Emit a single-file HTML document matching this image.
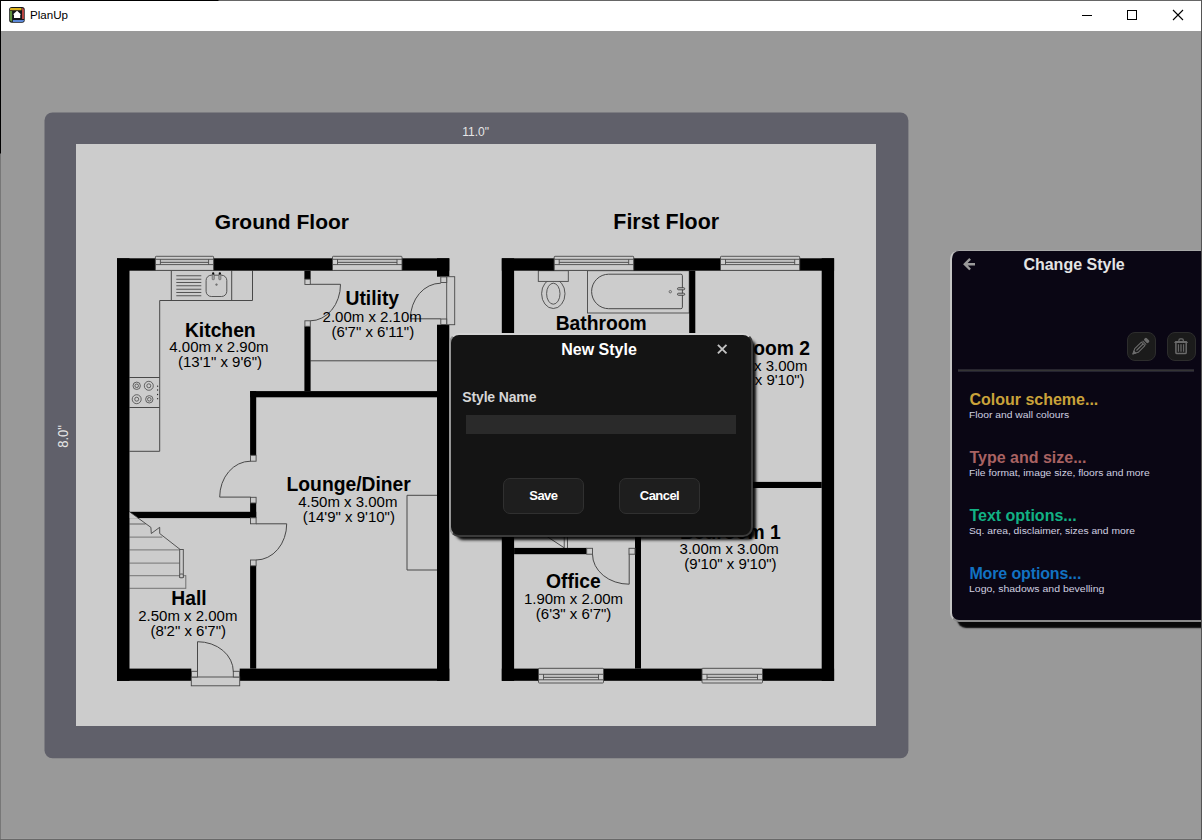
<!DOCTYPE html>
<html lang="en">
<head>
<meta charset="utf-8">
<title>PlanUp</title>
<style>
html,body{margin:0;padding:0;}
body{width:1202px;height:840px;overflow:hidden;position:relative;background:#999999;font-family:"Liberation Sans",sans-serif;}
.abs{position:absolute;}
#edgeL{left:0;top:0;width:1px;height:840px;background:linear-gradient(#000 0,#000 153px,#777 154px,#777 100%);}
#edgeT{left:0;top:0;width:1202px;height:1px;background:linear-gradient(90deg,#000 0,#000 218px,#666 219px,#666 100%);}
#edgeR{left:1201px;top:0;width:1px;height:840px;background:#555;}
#edgeB{left:1px;top:838px;width:1200px;height:1px;background:#9d9d9d;}
#edgeB2{left:0;top:839px;width:1202px;height:1px;background:#686868;}
#titlebar{left:1px;top:1px;width:1200px;height:30px;background:#fff;}
#apptitle{left:30px;top:7px;font-size:11.6px;line-height:15px;color:#000;white-space:nowrap;}
#frame{left:44.5px;top:112.4px;width:864px;height:646px;background:#60606a;border-radius:8px;}
#paper{left:76px;top:144px;width:800px;height:582px;background:#cccccc;}
#dimW{left:425.6px;top:125px;width:100px;text-align:center;font-size:12px;line-height:15px;color:#e6e6e6;}
#dimH{left:13.2px;top:427.5px;width:100px;text-align:center;font-size:14px;line-height:17px;color:#e6e6e6;transform:rotate(-90deg) scale(0.93,1.05);}
#plan{left:0;top:0;}
#plan text{font-family:"Liberation Sans",sans-serif;fill:#000;text-anchor:middle;}
#plan .ft{font-size:21px;font-weight:bold;}
#plan .rn{font-size:19.3px;font-weight:bold;}
#plan .rd{font-size:15px;}
/* right panel */
#panel{left:950px;top:250px;width:252px;height:369px;background:#0a0614;border-radius:9px 0 0 9px;border-left:2px solid #c4c4c4;border-top:1px solid #a8a8a8;border-bottom:2px solid #8a8a8a;box-shadow:7px 6px 1.5px rgba(0,0,0,.95);}
#ptitle{left:1023.4px;top:255.3px;font-size:16px;font-weight:bold;line-height:20px;color:#e4e4e4;white-space:nowrap;}
.ibtn{width:29px;height:29px;box-sizing:border-box;border:1px solid #2d2d2d;background:#1b1b1b;border-radius:8px;}
#pdiv{left:958px;top:369px;width:236px;height:3px;background:linear-gradient(#27252f 0,#27252f 1px,#343434 1px,#343434 2px,#242230 2px,#242230 3px);}
.mi{left:969.4px;font-size:16px;font-weight:bold;line-height:20px;white-space:nowrap;}
.ms{left:968.8px;font-size:9.2px;line-height:13px;color:#d0d0e0;white-space:nowrap;transform:scaleX(1.12);transform-origin:0 0;}
/* dialog */
#dlg{left:449px;top:333px;width:300px;height:200px;background:#141414;border-radius:10px;border-left:2px solid #969696;border-top:2px solid #d3d3d3;border-right:2px solid #3b3b3b;border-bottom:2px solid #3b3b3b;box-shadow:5px 5px 3px -2.8px rgba(0,0,0,.95);}
#dtitle{left:561.2px;top:339.5px;font-size:16px;font-weight:bold;line-height:20px;color:#fff;white-space:nowrap;}
#dlabel{left:462.3px;top:388.6px;font-size:14px;font-weight:bold;line-height:17px;color:#d6d6d6;white-space:nowrap;letter-spacing:-0.15px;}
#dinput{left:466px;top:415px;width:270px;height:19px;background:#2a2a2a;}
.dbtn{top:478px;width:80.6px;height:35.7px;box-sizing:border-box;border:1px solid #303030;background:#1e1e1e;border-radius:7px;color:#fff;font-size:13px;font-weight:bold;line-height:33.6px;text-align:center;letter-spacing:-0.55px;}
</style>
</head>
<body>
<div class="abs" id="titlebar"></div>
<svg class="abs" id="appicon" style="left:8px;top:6px" width="18" height="18" viewBox="8 6 18 18">
<rect x="9.2" y="7" width="15.5" height="15.7" rx="2.6" fill="#14161a"/>
<path d="M10.9 7.9H21.5V10.3H10L10 9Q10 7.9 10.9 7.9Z" fill="#dcb21e"/>
<path d="M22 8.1Q24 8.3 24 10V18.9H22Z" fill="#b94442"/>
<path d="M9.9 10.9H12.1V21.8Q9.9 21.6 9.9 19.6Z" fill="#5f923c"/>
<path d="M12.9 20H23.9V20.6Q23.7 22.1 22 22.1H12.9Z" fill="#5b88d8"/>
<path d="M17.05 10.7L21.1 14.5H20.2V17.9H14V14.5H12.9Z" fill="#fff"/>
</svg>
<div class="abs" id="apptitle">PlanUp</div>
<svg class="abs" id="winctl" style="left:1070px;top:1px" width="130" height="30" viewBox="1070 1 130 30">
<path d="M1082 15.5H1092" stroke="#000" stroke-width="1" fill="none"/>
<rect x="1127.5" y="10.5" width="9" height="9" stroke="#000" stroke-width="1" fill="none"/>
<path d="M1173 10L1183 20M1183 10L1173 20" stroke="#000" stroke-width="1.1" fill="none"/>
</svg>

<svg class="abs" style="left:40px;top:108px" width="874" height="656" viewBox="40 108 874 656"><rect x="44.5" y="112.5" width="863.9" height="645.8" rx="8" fill="#60606a"/></svg>
<div class="abs" id="paper"></div>
<div class="abs" id="dimW">11.0"</div>
<div class="abs" id="dimH">8.0"</div>

<!--PLAN-->
<svg class="abs" id="plan" width="1202" height="840" viewBox="0 0 1202 840">
<text x="281.9" y="229" class="ft">Ground Floor</text>
<text x="666.2" y="229" class="ft" style="font-size:21.4px">First Floor</text>
<path d="M159.7 300.5H252.5V270.7M171.3 270.7V300.5M231.7 270.7V300.5M159.7 300.5V451.3H129.5" stroke="#484848" stroke-width="1" fill="none"/>
<path d="M176.3 275.8H201.3M176.3 279.2H201.3M176.3 282.5H201.3M176.3 285.8H201.3M176.3 289.2H201.3M176.3 292.5H201.3M176.3 295.8H201.3" stroke="#555" stroke-width="1.1" fill="none"/>
<rect x="206.1" y="275.2" width="20.7" height="21.3" fill="none" stroke="#484848" stroke-width="0.9" rx="5.2"/>
<rect x="212.2" y="274.0" width="2.1" height="5.7" fill="#a8a8a8" stroke="#555" stroke-width="0.6" rx="0.6"/>
<rect x="218.8" y="274.0" width="2.1" height="5.7" fill="#a8a8a8" stroke="#555" stroke-width="0.6" rx="0.6"/>
<circle cx="213.2" cy="273.5" r="1.15" fill="#0a0a0a"/><circle cx="219.85" cy="273.5" r="1.15" fill="#0a0a0a"/>
<circle cx="216.5" cy="284.6" r="0.9" fill="#777" stroke="#555" stroke-width="0.4"/>
<path d="M129.5 377.5H159.7M129.5 407.5H159.7" stroke="#484848" stroke-width="1" fill="none"/>
<circle cx="136.7" cy="385.8" r="3.7" fill="none" stroke="#484848" stroke-width="0.8"/><circle cx="136.7" cy="385.8" r="1.8" fill="none" stroke="#484848" stroke-width="0.8"/>
<circle cx="148.8" cy="385.8" r="4.5" fill="none" stroke="#484848" stroke-width="0.8"/><circle cx="148.8" cy="385.8" r="2" fill="none" stroke="#484848" stroke-width="0.8"/>
<circle cx="136.7" cy="399.2" r="4.5" fill="none" stroke="#484848" stroke-width="0.8"/><circle cx="136.7" cy="399.2" r="2" fill="none" stroke="#484848" stroke-width="0.8"/>
<circle cx="149.3" cy="399.3" r="3.7" fill="none" stroke="#484848" stroke-width="0.8"/><circle cx="149.3" cy="399.3" r="1.8" fill="none" stroke="#484848" stroke-width="0.8"/>
<circle cx="157.6" cy="386.2" r="0.65" fill="#222"/>
<circle cx="157.6" cy="390" r="0.65" fill="#222"/>
<circle cx="157.6" cy="394.5" r="0.65" fill="#222"/>
<circle cx="157.6" cy="398.7" r="0.65" fill="#222"/>
<path d="M310.5 360.8H437" stroke="#484848" stroke-width="1" fill="none"/>
<path d="M437 495.3H407V570H437" stroke="#484848" stroke-width="1" fill="none"/>
<path d="M129.5 524H145.6M129.5 537.1H162.3M129.5 549.9H179.7M129.5 563.1H179.7M129.5 575.7H185.8M129.5 588.3H185.8" stroke="#858585" stroke-width="1.3" fill="none"/>
<path d="M185.8 575.2V588.8" stroke="#666" stroke-width="0.9" fill="none"/>
<path d="M129.5 511.8L150.9 527.4L151.3 533.5L159.7 527.3V533.5L180.2 549.5" stroke="#333" stroke-width="0.8" fill="none"/>
<rect x="179.7" y="549.5" width="3.6" height="28.0" fill="#cccccc" stroke="#484848" stroke-width="0.9"/>
<rect x="179.7" y="574.0" width="3.6" height="3.8" fill="#cccccc" stroke="#484848" stroke-width="0.9" rx="1"/>
<rect x="117.0" y="258.3" width="332.3" height="12.4" fill="#000"/>
<rect x="117.0" y="668.6" width="74.3" height="12.2" fill="#000"/>
<rect x="239.7" y="668.6" width="209.6" height="12.2" fill="#000"/>
<rect x="117.0" y="258.3" width="12.5" height="422.6" fill="#000"/>
<rect x="437.0" y="258.3" width="12.3" height="18.4" fill="#000"/>
<rect x="437.0" y="324.7" width="12.3" height="356.2" fill="#000"/>
<rect x="304.4" y="270.7" width="6.2" height="8.5" fill="#000"/>
<rect x="304.4" y="326.3" width="6.2" height="64.9" fill="#000"/>
<rect x="250.1" y="391.1" width="186.9" height="6.2" fill="#000"/>
<rect x="250.1" y="391.1" width="6.1" height="64.2" fill="#000"/>
<rect x="250.1" y="503.0" width="6.1" height="15.1" fill="#000"/>
<rect x="250.1" y="565.8" width="6.1" height="102.8" fill="#000"/>
<rect x="129.5" y="511.8" width="126.7" height="6.3" fill="#000"/>
<path d="M129.5 511.7L138.3 518.1H129.5Z" fill="#cccccc"/>
<path d="M129.5 511.8L138.3 518.1" stroke="#333" stroke-width="0.8" fill="none"/>
<rect x="304.9" y="279.2" width="5.4" height="5.3" fill="#cccccc" stroke="#484848" stroke-width="0.9"/>
<rect x="304.9" y="320.8" width="5.4" height="5.5" fill="#cccccc" stroke="#484848" stroke-width="0.9"/>
<path d="M310.3 284.3H340.5A30.2 36.5 0 0 1 310.3 320.8" stroke="#484848" stroke-width="1" fill="none"/>
<rect x="250.5" y="455.3" width="5.6" height="5.9" fill="#cccccc" stroke="#484848" stroke-width="0.9"/>
<rect x="250.5" y="497.3" width="5.6" height="5.7" fill="#cccccc" stroke="#484848" stroke-width="0.9"/>
<path d="M250.5 497.1H219.7A30.8 35.9 0 0 1 250.5 461.2" stroke="#484848" stroke-width="1" fill="none"/>
<rect x="250.5" y="517.8" width="5.6" height="6.0" fill="#cccccc" stroke="#484848" stroke-width="0.9"/>
<rect x="250.5" y="560.0" width="5.6" height="5.8" fill="#cccccc" stroke="#484848" stroke-width="0.9"/>
<path d="M256.1 523.8H286.7A30.6 36.2 0 0 1 256.1 560" stroke="#484848" stroke-width="1" fill="none"/>
<rect x="446.7" y="276.7" width="8.0" height="48.0" fill="#cccccc" stroke="#484848" stroke-width="0.9"/>
<rect x="440.8" y="276.9" width="5.9" height="5.6" fill="#cccccc" stroke="#484848" stroke-width="0.9"/>
<rect x="440.8" y="319.0" width="5.9" height="5.5" fill="#cccccc" stroke="#484848" stroke-width="0.9"/>
<path d="M440.8 318.8H410.4A30.4 35.6 0 0 1 440.8 283.2" stroke="#484848" stroke-width="1" fill="none"/>
<rect x="191.3" y="677.0" width="48.4" height="8.8" fill="#cccccc" stroke="#484848" stroke-width="0.9"/>
<rect x="191.5" y="671.3" width="6.0" height="5.7" fill="#cccccc" stroke="#484848" stroke-width="0.9"/>
<rect x="233.3" y="671.3" width="6.2" height="5.7" fill="#cccccc" stroke="#484848" stroke-width="0.9"/>
<path d="M197.5 671.3V641.7A35.8 29.8 0 0 1 233.3 671.5" stroke="#484848" stroke-width="1" fill="none"/>
<rect x="155.4" y="256.3" width="58.2" height="14.1" fill="#cccccc" stroke="#484848" stroke-width="0.9" rx="0.8"/>
<rect x="160.4" y="259.3" width="48.2" height="3.1" fill="#c0c0c0"/>
<path d="M155.4 259.3H213.6M160.4 262.40000000000003H208.6M155.4 264.6H213.6M160.4 259.3V264.6M208.6 259.3V264.6" stroke="#484848" stroke-width="0.9" fill="none"/>
<rect x="332.5" y="256.3" width="69.5" height="14.1" fill="#cccccc" stroke="#484848" stroke-width="0.9" rx="0.8"/>
<rect x="337.5" y="259.3" width="59.5" height="3.1" fill="#c0c0c0"/>
<path d="M332.5 259.3H402M337.5 262.40000000000003H397M332.5 264.6H402M337.5 259.3V264.6M397 259.3V264.6" stroke="#484848" stroke-width="0.9" fill="none"/>
<text x="220.3" y="336.7" class="rn">Kitchen</text>
<text x="218.9" y="351.7" class="rd">4.00m x 2.90m</text>
<text x="220" y="367.3" class="rd">(13&#39;1&quot; x 9&#39;6&quot;)</text>
<text x="372.3" y="305" class="rn">Utility</text>
<text x="372.2" y="321.5" class="rd">2.00m x 2.10m</text>
<text x="372.8" y="337" class="rd">(6&#39;7&quot; x 6&#39;11&quot;)</text>
<text x="348.7" y="490.7" class="rn">Lounge/Diner</text>
<text x="347.8" y="506.5" class="rd">4.50m x 3.00m</text>
<text x="348.8" y="521.7" class="rd">(14&#39;9&quot; x 9&#39;10&quot;)</text>
<text x="189" y="605" class="rn">Hall</text>
<text x="187.8" y="620.5" class="rd">2.50m x 2.00m</text>
<text x="188.2" y="635.8" class="rd">(8&#39;2&quot; x 6&#39;7&quot;)</text>
<rect x="587.5" y="270.7" width="101.7" height="42.3" fill="none" stroke="#484848" stroke-width="0.9"/>
<path d="M608.7 274.2H680.9Q682.4 274.2 682.4 275.7V307.2Q682.4 308.7 680.9 308.7H608.7A17.1 17.25 0 0 1 608.7 274.2Z" stroke="#484848" stroke-width="1" fill="none"/>
<rect x="677.5" y="287.7" width="7.2" height="2.1" fill="#bbb" stroke="#333" stroke-width="0.8" rx="1"/>
<rect x="677.5" y="293.2" width="7.2" height="2.1" fill="#bbb" stroke="#333" stroke-width="0.8" rx="1"/>
<circle cx="670.3" cy="291.7" r="1.2" fill="none" stroke="#484848" stroke-width="0.7"/>
<ellipse cx="553.3" cy="293.7" rx="11.7" ry="14.8" fill="#cccccc" stroke="#484848" stroke-width="0.9"/>
<ellipse cx="553.3" cy="293.7" rx="6.7" ry="10.5" fill="none" stroke="#484848" stroke-width="0.9"/>
<rect x="538.3" y="270.7" width="30.0" height="10.7" fill="#cccccc" stroke="#484848" stroke-width="0.9"/>
<path d="M514.4 515L564.2 547.8" stroke="#484848" stroke-width="1" fill="none"/>
<rect x="564.2" y="500.0" width="3.3" height="50.0" fill="#cccccc" stroke="#484848" stroke-width="0.9"/>
<rect x="501.8" y="258.3" width="332.3" height="12.4" fill="#000"/>
<rect x="501.8" y="668.6" width="332.3" height="12.2" fill="#000"/>
<rect x="501.8" y="258.3" width="12.3" height="422.6" fill="#000"/>
<rect x="821.7" y="258.3" width="12.4" height="422.6" fill="#000"/>
<rect x="689.2" y="270.7" width="6.1" height="217.3" fill="#000"/>
<rect x="689.2" y="481.9" width="132.5" height="6.1" fill="#000"/>
<rect x="635.0" y="488.0" width="6.0" height="180.6" fill="#000"/>
<rect x="514.1" y="547.9" width="72.6" height="6.3" fill="#000"/>
<rect x="635.0" y="540.0" width="6.0" height="14.2" fill="#000"/>
<rect x="586.7" y="548.3" width="5.8" height="5.9" fill="#cccccc" stroke="#484848" stroke-width="0.9"/>
<rect x="629.0" y="548.3" width="6.0" height="5.9" fill="#cccccc" stroke="#484848" stroke-width="0.9"/>
<path d="M629.2 554.2V584.2A36.7 30 0 0 1 592.5 554.2" stroke="#484848" stroke-width="1" fill="none"/>
<rect x="554.2" y="256.3" width="79.5" height="14.1" fill="#cccccc" stroke="#484848" stroke-width="0.9" rx="0.8"/>
<rect x="559.2" y="259.3" width="69.5" height="3.1" fill="#c0c0c0"/>
<path d="M554.2 259.3H633.7M559.2 262.40000000000003H628.7M554.2 264.6H633.7M559.2 259.3V264.6M628.7 259.3V264.6" stroke="#484848" stroke-width="0.9" fill="none"/>
<rect x="720.5" y="256.3" width="79.2" height="14.1" fill="#cccccc" stroke="#484848" stroke-width="0.9" rx="0.8"/>
<rect x="725.5" y="259.3" width="69.2" height="3.1" fill="#c0c0c0"/>
<path d="M720.5 259.3H799.7M725.5 262.40000000000003H794.7M720.5 264.6H799.7M725.5 259.3V264.6M794.7 259.3V264.6" stroke="#484848" stroke-width="0.9" fill="none"/>
<rect x="538.5" y="668.3" width="65.0" height="14.7" fill="#cccccc" stroke="#484848" stroke-width="0.9" rx="0.8"/>
<rect x="543.5" y="674.3" width="55.0" height="3.1" fill="#c0c0c0"/>
<path d="M538.5 674.3H603.5M543.5 677.4H598.5M538.5 679.8H603.5M543.5 674.3V679.8M598.5 674.3V679.8" stroke="#484848" stroke-width="0.9" fill="none"/>
<rect x="702.0" y="668.3" width="60.5" height="14.7" fill="#cccccc" stroke="#484848" stroke-width="0.9" rx="0.8"/>
<rect x="707.0" y="674.3" width="50.5" height="3.1" fill="#c0c0c0"/>
<path d="M702 674.3H762.5M707 677.4H757.5M702 679.8H762.5M707 674.3V679.8M757.5 674.3V679.8" stroke="#484848" stroke-width="0.9" fill="none"/>
<text x="601.2" y="330" class="rn">Bathroom</text>
<text x="759.6" y="355" class="rn">Bedroom 2</text>
<text x="757.8" y="370.8" class="rd">3.00m x 3.00m</text>
<text x="758.5" y="385" class="rd">(9&#39;10&quot; x 9&#39;10&quot;)</text>
<text x="730.3" y="538.5" class="rn">Bedroom 1</text>
<text x="729.2" y="553.8" class="rd">3.00m x 3.00m</text>
<text x="730.5" y="569.4" class="rd">(9&#39;10&quot; x 9&#39;10&quot;)</text>
<text x="573.4" y="587.5" class="rn">Office</text>
<text x="573.5" y="603.7" class="rd">1.90m x 2.00m</text>
<text x="573.6" y="618.7" class="rd">(6&#39;3&quot; x 6&#39;7&quot;)</text>
</svg>
<!--/PLAN-->

<!-- right panel -->
<div class="abs" id="panel"></div>
<svg class="abs" style="left:962px;top:257px" width="15" height="14" viewBox="962 257 15 14">
<path d="M975 264.2H966M970.1 258.9L964.8 264.2L970.1 269.5" stroke="#9a9a9a" stroke-width="2.4" fill="none" stroke-linejoin="miter"/>
</svg>
<div class="abs" id="ptitle">Change Style</div>
<div class="abs ibtn" style="left:1127px;top:332px"></div>
<div class="abs ibtn" style="left:1167px;top:332px"></div>
<svg class="abs" style="left:1127px;top:332px" width="70" height="30" viewBox="1127 332 70 30">
<g transform="translate(1132.9,354) rotate(-44.5)" fill="none" stroke="#6c6c6c" stroke-width="1.05" stroke-linejoin="round">
<path d="M0.2 0L5 -2.5H14.4V2.5H5Z"/>
<path d="M0 0L2.8 -1.4V1.4Z" fill="#6c6c6c"/>
<path d="M5 0H14.2" stroke-width="1.2"/>
<path d="M16.1 -2.6V2.6" stroke-width="1"/>
<rect x="17.6" y="-2.8" width="3.4" height="5.6" rx="1.3" fill="#6c6c6c" stroke="none"/>
</g>
<g fill="none" stroke="#6a6a6a">
<path d="M1178.9 341.3V340.2Q1178.9 338.9 1180.2 338.9H1182Q1183.3 338.9 1183.3 340.2V341.3" stroke-width="1.2"/>
<path d="M1175.4 341.1H1186.7L1188.1 343H1174Z" fill="#6a6a6a" stroke="none"/>
<path d="M1175.9 343V352.4Q1175.9 353.5 1177 353.5H1185.1Q1186.2 353.5 1186.2 352.4V343" stroke-width="1.5"/>
<path d="M1178.4 344.2V351.7M1183.6 344.2V351.7" stroke-width="1.1"/>
<path d="M1181 344.2V351.7" stroke-width="2.2" stroke="#4c4c4c"/>
</g>
</svg>
<div class="abs" id="pdiv"></div>
<div class="abs mi" style="top:390px;color:#c9a23a">Colour scheme...</div>
<div class="abs ms" style="top:408.9px">Floor and wall colours</div>
<div class="abs mi" style="top:448.1px;color:#a96262">Type and size...</div>
<div class="abs ms" style="top:466.9px">File format, image size, floors and more</div>
<div class="abs mi" style="top:505.9px;color:#12b184">Text options...</div>
<div class="abs ms" style="top:525px">Sq. area, disclaimer, sizes and more</div>
<div class="abs mi" style="top:564px;color:#1272c2;letter-spacing:-0.13px">More options...</div>
<div class="abs ms" style="top:583.4px;transform:scaleX(1.142)">Logo, shadows and bevelling</div>

<!-- dialog -->
<div class="abs" id="dlg"></div>
<div class="abs" id="dtitle">New Style</div>
<svg class="abs" style="left:715px;top:343px" width="14" height="13" viewBox="715 343 14 13">
<path d="M717.9 344.8L726.5 353.4M726.5 344.8L717.9 353.4" stroke="#c2c2c2" stroke-width="1.9" fill="none"/>
</svg>
<div class="abs" id="dlabel">Style Name</div>
<div class="abs" id="dinput"></div>
<div class="abs dbtn" style="left:503.1px">Save</div>
<div class="abs dbtn" style="left:619.2px">Cancel</div>
<div class="abs" id="edgeT"></div>
<div class="abs" id="edgeL"></div>
<div class="abs" id="edgeR"></div>
<div class="abs" id="edgeB"></div>
<div class="abs" id="edgeB2"></div>
</body>
</html>
